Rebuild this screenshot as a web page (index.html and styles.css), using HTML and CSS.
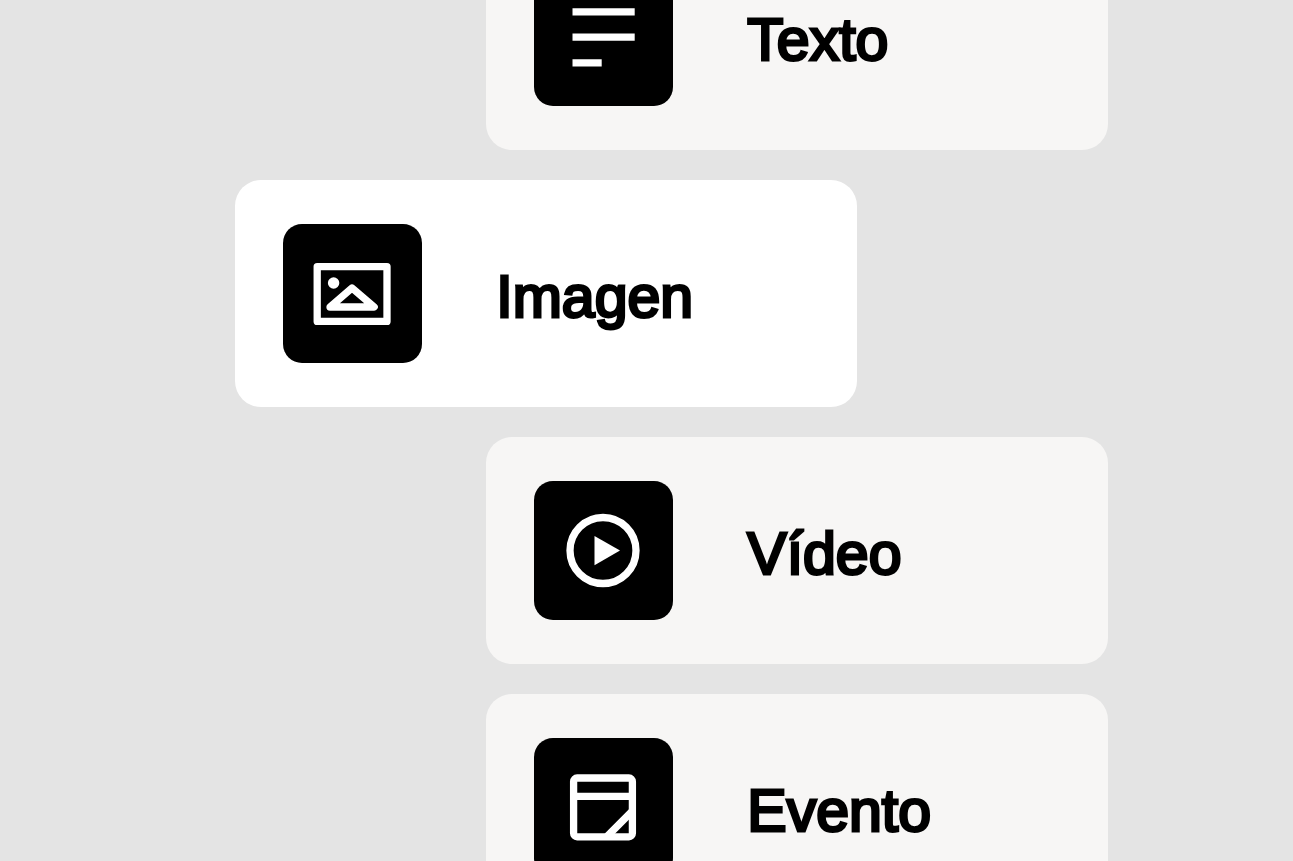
FILE: index.html
```html
<!DOCTYPE html>
<html lang="es">

<head>
    <meta charset="UTF-8">
    <meta name="viewport" content="width=device-width, initial-scale=1.0">
    <title>Bloques</title>
    <link rel="stylesheet" href="styles.css">
</head>

<body>
    <ul class="blocks">
        <li class="block">
            <svg class="block-icon" viewBox="0 0 139 139" aria-hidden="true">
                <path d="M38.5 44.8h62.2M38.5 70.1h62.2M38.5 95.8h29.2" />
            </svg>
            <span class="block-name">Texto</span>
        </li>
        <li class="block active">
            <svg class="block-icon" viewBox="0 0 139 139" aria-hidden="true">
                <rect x="34.2" y="42.6" width="69.8" height="54.8" stroke-linejoin="round" />
                <path d="M47 83L69 64L91.2 83Z" stroke-linejoin="round" />
                <circle class="solid" cx="50.6" cy="59" r="5.7" />
            </svg>
            <span class="block-name">Imagen</span>
        </li>
        <li class="block">
            <svg class="block-icon" viewBox="0 0 139 139" aria-hidden="true">
                <circle cx="69" cy="69.5" r="33" />
                <path class="solid" d="M60.5 55L86 69.6L60.5 84.3Z" />
            </svg>
            <span class="block-name">Vídeo</span>
        </li>
        <li class="block">
            <svg class="block-icon" viewBox="0 0 139 139" aria-hidden="true">
                <rect x="39.6" y="40" width="58.8" height="58.8" rx="3.5" />
                <path d="M39.5 58.3h59M98 73.4L73.1 98.3" />
            </svg>
            <span class="block-name">Evento</span>
        </li>
    </ul>
</body>

</html>
```

FILE: styles.css
```css
body {
    font-family: "Liberation Sans", Arial, sans-serif;
    margin: 0;
    height: 100vh;
    overflow: hidden;
    background-color: #e4e4e4;
    color: #000;
}

.blocks {
    display: flex;
    flex-direction: column;
    align-items: flex-end;
    gap: 30px;
    width: 873px;
    max-width: 80%;
    margin: -77px auto 0 18.2%;
    padding: 0;
    list-style: none;
}

.block {
    display: flex;
    align-items: center;
    gap: 74px;
    box-sizing: border-box;
    width: 622px;
    max-width: 100%;
    padding: 44px 48px;
    border-radius: 26px;
    background-color: #f7f6f5;
}

.block.active {
    align-self: flex-start;
    background-color: #fff;
}

.block-icon {
    flex: none;
    width: 139px;
    height: 139px;
    border-radius: 19px;
    background-color: #000;
    fill: none;
    stroke: #fff;
    stroke-width: 7.3;
}

.block-icon .solid {
    fill: #fff;
    stroke: none;
}

.block-name {
    padding-top: 6px;
    font-size: 59px;
    line-height: 72px;
    -webkit-text-stroke: 3px #000;
}
```
